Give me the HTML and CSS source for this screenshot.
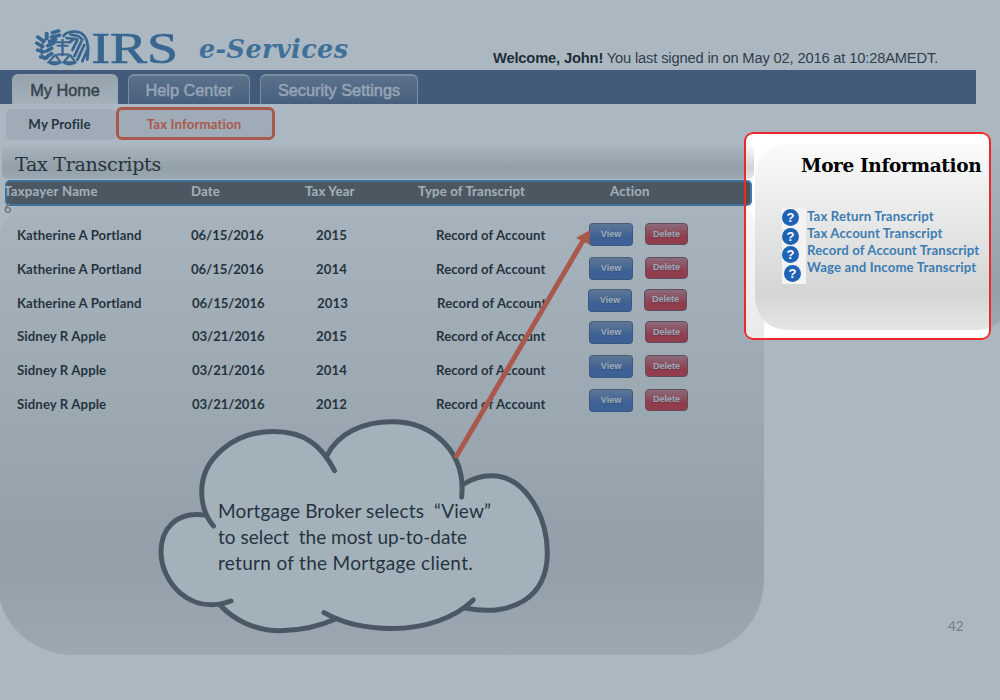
FILE: index.html
```html
<!DOCTYPE html>
<html lang="en">
<head>
<meta charset="utf-8">
<title>IRS e-Services</title>
<link rel="stylesheet" href="styles.css">
</head>
<body>
<div class="page">
  <header class="header">
    <svg class="logo" width="144" height="44" viewBox="0 0 144 44">
      <g fill="none" stroke="#316ba5" stroke-width="2.300" stroke-linecap="round" transform="translate(.8 2.200) scale(.99 .87)">
        <path d="M12 9C5 16 3 27 9 35" stroke-width="1.800"/>
        <path d="M2 9l6 5M1 16l6 4M2 24l6 2M5 32l6 1M11 5l0 6M17 4l6-2M16 9l8-2M14 14l6-2M12 19l6-3M11 25l5-3M12 31l4-3" stroke-width="4"/>
        <path d="M20 15h15M22 19h10M27 12v18M22 29h11M19 30l-6 8h12l-5-8M34 30l-6 8h12l-5-8M14 39q5 3 10 0M29 39q5 3 10 0"/>
        <path d="M28 8c3-6 12-6 17-4 7 4 9 15 7 31M31 10l8 1-5 4M35 6l8 2 4 4M42 12l-5 12M46 14l-7 17M49 18l-7 17M53 21l-6 16" stroke-width="2.900"/>
      </g>
      <text x="56.500" y="36" textLength="86.500" lengthAdjust="spacingAndGlyphs" class="logo-text">IRS</text>
    </svg>
    <div class="brand">e-Services</div>
    <div class="welcome"><b>Welcome, John!</b> You last signed in on May 02, 2016 at 10:28AMEDT.</div>
  </header>
  <nav class="tabs">
    <div class="tab tab-active">My Home</div>
    <div class="tab tab-help">Help Center</div>
    <div class="tab tab-security">Security Settings</div>
  </nav>
  <nav class="subtabs">
    <div class="subtab">My Profile</div>
    <div class="subtab subtab-selected">Tax Information</div>
  </nav>
  <main class="main">
    <section class="transcripts">
      <h1 class="title">Tax Transcripts</h1>
      <div class="panel">
        <div class="thead"><span>Taxpayer Name</span><span>Date</span><span>Tax Year</span><span>Type of Transcript</span><span>Action</span></div>
        <div class="stray">6</div>
        <div class="rows">
          <div class="row"><span>Katherine A Portland</span><span class="date">06/15/2016</span><span>2015</span><span>Record of Account</span><div class="actions a1"><button class="btn view">View</button><button class="btn delete">Delete</button></div></div>
          <div class="row"><span>Katherine A Portland</span><span class="date">06/15/2016</span><span>2014</span><span>Record of Account</span><div class="actions a2"><button class="btn view">View</button><button class="btn delete">Delete</button></div></div>
          <div class="row row-shift"><span>Katherine A Portland</span><span class="date">06/15/2016</span><span>2013</span><span>Record of Account</span><div class="actions a3"><button class="btn view">View</button><button class="btn delete">Delete</button></div></div>
          <div class="row"><span>Sidney R Apple</span><span class="date nudge">03/21/2016</span><span>2015</span><span>Record of Account</span><div class="actions a4"><button class="btn view">View</button><button class="btn delete">Delete</button></div></div>
          <div class="row"><span>Sidney R Apple</span><span class="date nudge">03/21/2016</span><span>2014</span><span>Record of Account</span><div class="actions a5"><button class="btn view">View</button><button class="btn delete">Delete</button></div></div>
          <div class="row"><span>Sidney R Apple</span><span class="date nudge">03/21/2016</span><span>2012</span><span>Record of Account</span><div class="actions a6"><button class="btn view">View</button><button class="btn delete">Delete</button></div></div>
        </div>
      </div>
    </section>
    <aside class="more">
      <h2 class="more-title">More Information</h2>
      <div class="help">
        <div class="icons"><i class="q">?</i><i class="q">?</i><i class="q">?</i><i class="q q-last">?</i></div>
        <div class="links"><a>Tax Return Transcript</a><a>Tax Account Transcript</a><a>Record of Account Transcript</a><a>Wage and Income Transcript</a></div>
      </div>
    </aside>
  </main>
  <svg class="drawing" width="1000" height="700" viewBox="0 0 1000 700">
    <path fill="#f1f2f2" d="M205 515C193 480 205 431.500 273.500 431.500C298 431.500 315 440 326.800 456C338 433 363 421.700 391.700 421.700C430 421.700 460 448 463 484C471 478 481 475.700 491.700 475.700C523 475.700 547.300 513 547.300 553C547.300 598 512 617 465 608C445 621 420 628.500 391.700 628.500C372 628.500 352 625 336.700 618.500C318 627 300 630.700 280 630.700C255 630.700 234 620 220 605C185 611 161 580 161 551.700C161 530 175 511 205 515Z"/>
    <g fill="none" stroke="#4e5050" stroke-width="5" stroke-linecap="round">
      <path d="M213.500 526C205 516 201.700 504 201.700 491.700C201.700 458 234 431.500 273.500 431.500C305 431.500 322 446 334.500 470.700"/>
      <path d="M326.800 456C338 433 363 421.700 391.700 421.700C434 421.700 466 453 461.700 497"/>
      <path d="M464 484C473 478 481 475.700 491.700 475.700C523 475.700 547.300 513 547.300 553C547.300 598 512 617 465 608"/>
      <path d="M473.300 600C455 618 425 628.500 391.700 628.500C367 628.500 342 623 324 612.700"/>
      <path d="M336.700 618.500C318 627 300 630.700 280 630.700C255 630.700 234 620 220 605"/>
      <path d="M231 601C190 616 161 582 161 551.700C161 530 175 511 205 515"/>
    </g>
    <path d="M456.500 456L584 239" stroke="#fa5227" stroke-width="5" stroke-linecap="round"/>
    <path d="M590 230L576 238L589.500 244.500Z" fill="#fa5227"/>
  </svg>
  <p class="callout"><span class="c1">Mortgage Broker selects&nbsp; “View”</span><span class="c2">to select&nbsp; the most up-to-date</span><span class="c3">return of the Mortgage client.</span></p>
  <div class="page-number">42</div>
  <div class="spotlight"></div>
</div>
</body>
</html>
```

FILE: styles.css
```css
* { box-sizing: border-box; }
body { margin: 0; font-family: Lato, sans-serif; font-variant-ligatures: none; }
.page { position: relative; width: 1000px; height: 700px; overflow: hidden; background: #fff; color: #0a0a0a; white-space: nowrap; }

.header { height: 70px; display: flex; padding: 27px 0 0 35px; }
.logo { flex: none; overflow: visible; }
.logo-text { font: 45px/1 "Liberation Serif", serif; fill: #316ba5; stroke: #316ba5; stroke-width: .7px; }
.brand { width: 258px; margin: 7px 0 0 20px; font: italic bold 25.500px/30px "DejaVu Serif", serif; color: #3c7cb2; letter-spacing: .4px; }
.welcome { margin: 21px 0 0 36px; font: 14.700px/20px "Liberation Sans", sans-serif; color: #222; letter-spacing: -.16px; }
.welcome b { color: #000; }

.tabs { display: flex; align-items: flex-end; gap: 10px; width: 976px; height: 34px; padding-left: 12px; background: #42567c; }
.tab { height: 30px; border: 1px solid #a9b3c4; border-width: 2px 1.500px 0; border-radius: 6px 6px 0 0; background: linear-gradient(#6e7f9c, #4a5e83); color: #d7dbe2; font: 16.300px/29px "Liberation Sans", sans-serif; text-align: center; -webkit-text-stroke: .5px; }
.tab-active { width: 106px; background: linear-gradient(#d9d9d9, #f2f2f2); border-color: #e3e3e3; color: #2b2b2b; }
.tab-help { width: 122px; }
.tab-security { width: 158px; }

.subtabs { display: flex; height: 41px; padding: 3px 0 0 6px; font-weight: bold; font-size: 13.300px; letter-spacing: .1px; }
.subtab { width: 110px; height: 31px; margin-top: 2px; line-height: 31px; border-radius: 5px; background: #e9eaeb; text-align: center; padding-right: 3px; }
.subtab-selected { width: 159px; height: 33px; margin-top: 0; line-height: 28px; border: 3px solid #fa5227; border-radius: 6px; color: #fa5227; }

.main { display: grid; grid-template-columns: 755px 1fr; }
.title { width: 752px; height: 34px; margin: 0 0 0 2px; padding-left: 13px; border-radius: 6px; background: linear-gradient(#fafafa 0%, #d2d3d3 68%, #e3e4e4); font: 19px/38px "DejaVu Serif", serif; letter-spacing: -.25px; }
.panel { width: 767px; height: 474px; margin: 2px 0 0 -3px; border-radius: 75px; background: linear-gradient(#fafafa 0%, #d2d3d3 80%, #e2e3e3 100%); }
.thead { display: grid; grid-template-columns: 184px 114px 113px 192px 1fr; width: 747px; height: 26px; margin-left: 8px; border: 2px solid #3c7cb2; border-radius: 5px; background: #505050; color: #eee; font-size: 13.200px; font-weight: bold; line-height: 18px; letter-spacing: .15px; transform: translateY(-1px); }
.thead span:first-child { margin-left: -3px; letter-spacing: .25px; }
.stray { position: relative; z-index: 1; height: 14px; padding-left: 7px; margin-top: -6px; font-size: 13px; font-weight: bold; line-height: 14px; color: #777; }
.rows { display: grid; grid-auto-rows: 33.800px; margin-top: 4px; padding-left: 20px; }
.row { display: grid; grid-template-columns: 174px 125px 120px 153px 1fr; font-size: 13.200px; font-weight: bold; line-height: 33px; letter-spacing: .1px; }
.date { letter-spacing: -.1px; }
.row .nudge, .row-shift span:not(:first-child) { padding-left: 1px; }
.row-shift span { line-height: 32px; }
.actions { display: flex; align-items: flex-start; gap: 12px; padding-top: 4px; }
.a3 { margin: -2px 0 0 -1px; }
.a4, .a5, .a6 { margin-top: -3px; }
.btn { width: 44px; height: 23px; padding: 0; border: 1px solid #355189; border-top-color: #4f5f7c; border-radius: 4px; color: #e3e8ef; font: bold 9px/19px "Liberation Sans", sans-serif; text-align: center; text-shadow: 0 1px 1px rgba(0, 0, 0, .35); }
.view { background: linear-gradient(#7288ae, #3860ae 65%); }
.delete { width: 43px; height: 22px; border-color: #7a3b45; background: linear-gradient(#c4747c, #cf1f2b 65%); }

.more { position: relative; width: 255px; height: 186px; margin-top: -1px; border-radius: 32px; background: linear-gradient(#fbfbfb, #d4d5d5 80%, #e4e5e5); }
.more-title { margin: 0 0 0 46px; padding-top: 8px; font: bold 18.500px/28px "DejaVu Serif", serif; color: #000; letter-spacing: -.35px; }
.help { display: flex; padding: 28px 0 0 27px; }
.icons { display: grid; grid-auto-rows: 18.500px; width: 24px; background: #f3f3f3; height: 76px; padding-top: 1px; }
.q { width: 17px; height: 17px; border-radius: 50%; background: #1f63b5; color: #fff; font: bold 13px/17px "Liberation Sans", sans-serif; text-align: center; }
.q-last { margin-left: 2px; }
.links { display: grid; grid-template-rows: 17px 17px 17px 17px; margin-left: 1px; font-size: 13.200px; font-weight: bold; line-height: 17px; color: #3c7cb2; letter-spacing: .13px; }

.drawing { position: absolute; left: 0; top: 0; }
.callout { position: absolute; left: 218px; top: 498px; margin: 0; display: grid; grid-auto-rows: 26px; font-size: 19px; line-height: 26px; }
.c1 { letter-spacing: .15px; }
.c3 { letter-spacing: .3px; }
.page-number { position: absolute; left: 948px; top: 617px; font-size: 13.500px; line-height: 18px; color: #999; }
.spotlight { position: absolute; left: 743.500px; top: 132px; width: 247px; height: 208px; border: 2px solid #e9292c; border-radius: 9px; box-shadow: 0 0 0 1200px rgba(68, 97, 119, .45); }
```
